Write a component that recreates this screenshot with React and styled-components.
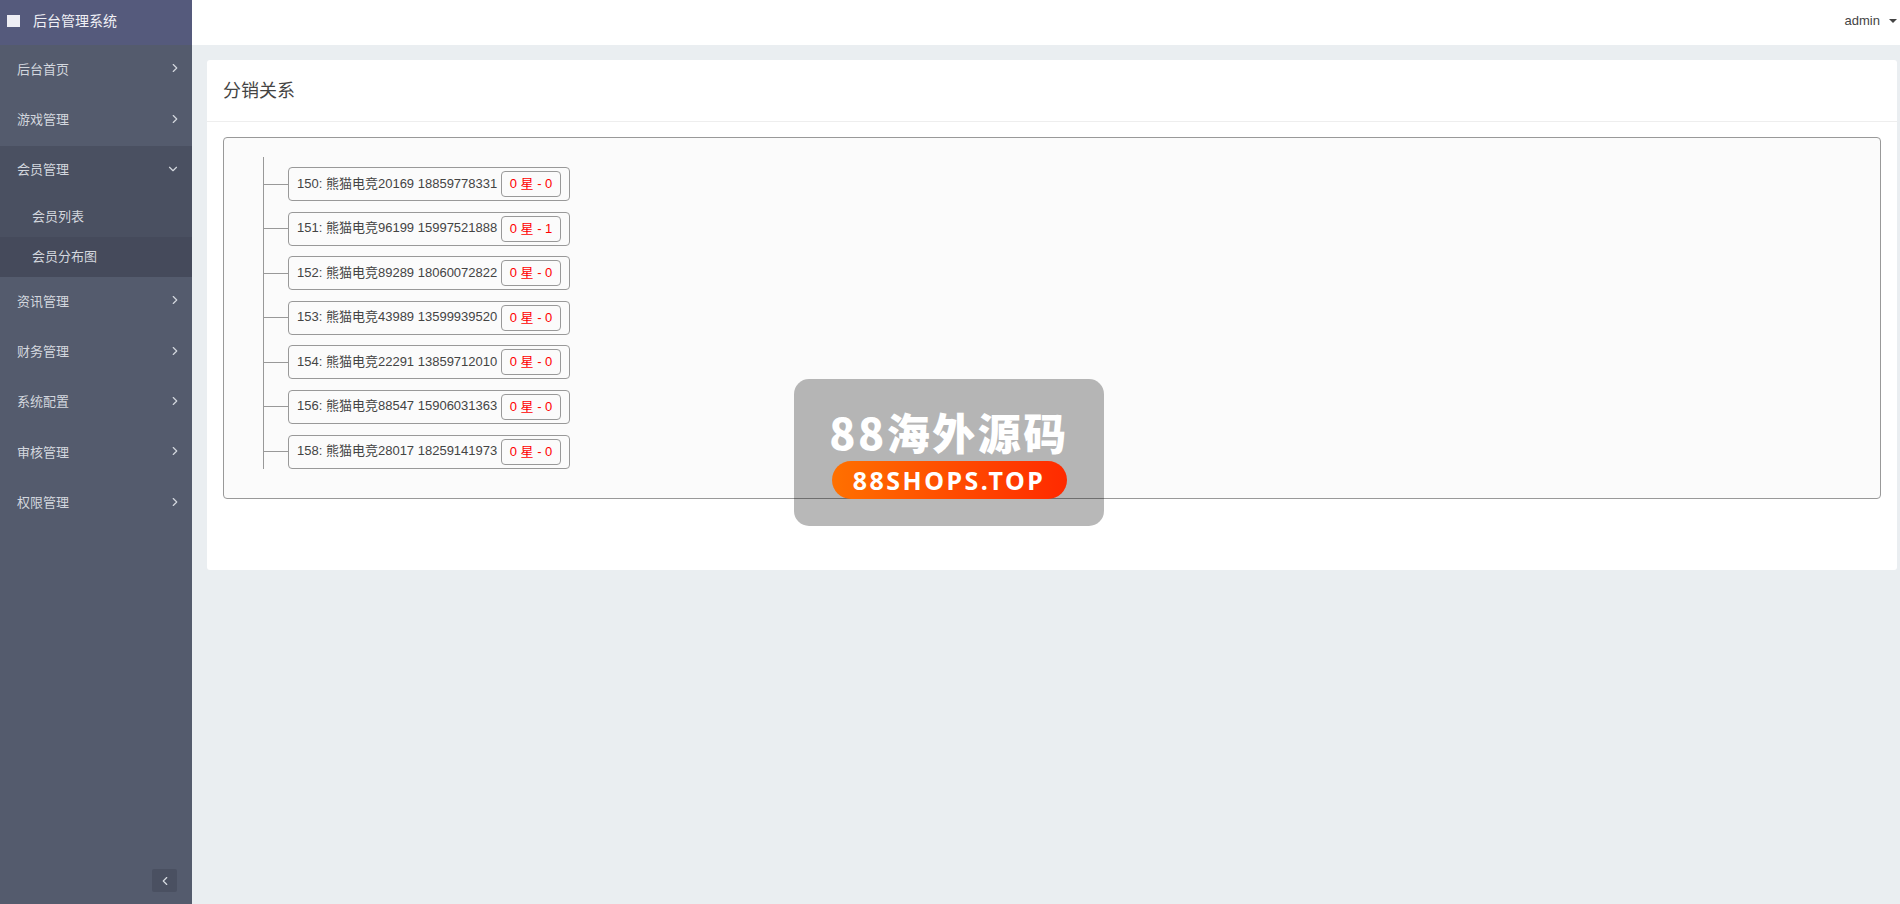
import { createGlobalStyle } from "styled-components";
import styled from "styled-components";
import { ChevronRight, ChevronDown, ChevronLeft } from "lucide-react";

const GlobalStyle = createGlobalStyle`
  html, body {
    margin: 0;
    padding: 0;
    height: 100%;
    overflow: hidden;
  }
  body {
    background: #eaeef1;
    font-family: "Liberation Sans", "Noto Sans CJK SC", sans-serif;
    font-size: 13px;
    color: #444;
  }
  * { box-sizing: border-box; }
`;

const Page = styled.div`
  position: relative;
  display: flex;
  width: 1900px;
  height: 904px;
`;

const Sidebar = styled.aside`
  width: 192px;
  flex: none;
  display: flex;
  flex-direction: column;
  background: #545b6d;
`;

const Brand = styled.div`
  height: 45px;
  flex: none;
  display: flex;
  align-items: center;
  padding: 0 0 5px 7px;
  gap: 13px;
  background: #555a7c;
  color: #f0f0f5;
  font-size: 14px;
`;

const BrandMark = styled.span`
  width: 13px;
  height: 12px;
  margin-top: 1px;
  background: #eeeef4;
`;

const Menu = styled.nav`
  flex: 1;
  display: flex;
  flex-direction: column;
`;

const MenuItem = styled.div`
  height: 50.4px;
  flex: none;
  display: flex;
  align-items: center;
  justify-content: space-between;
  padding: 0 10px 4px 17px;
  color: #d3d7de;
  background: ${(p) => (p.$open ? "#4a5061" : "transparent")};
`;

const OpenArrow = styled(ChevronDown)`
  margin-right: 2px;
`;

const SubItem = styled.div`
  height: 40.4px;
  flex: none;
  display: flex;
  align-items: center;
  padding: 0 0 2px 32px;
  color: #d3d7de;
  background: ${(p) => (p.$active ? "#454a5b" : "#4a5061")};
`;

const SideFooter = styled.div`
  display: flex;
  justify-content: flex-end;
  padding: 0 15px 12px 0;
`;

const CollapseBtn = styled.div`
  width: 25px;
  height: 23px;
  display: flex;
  align-items: center;
  justify-content: center;
  border-radius: 2px;
  background: #4a5061;
  color: #d8dce2;
`;

const Main = styled.main`
  flex: 1;
  display: flex;
  flex-direction: column;
  min-width: 0;
`;

const TopBar = styled.header`
  height: 45px;
  flex: none;
  display: flex;
  align-items: center;
  justify-content: flex-end;
  gap: 9px;
  padding: 0 3px 5px 0;
  background: #fff;
  color: #444;
`;

const Caret = styled.span`
  width: 0;
  height: 0;
  border-left: 4px solid transparent;
  border-right: 4px solid transparent;
  border-top: 4px solid #444;
  margin-top: 2px;
`;

const Content = styled.div`
  padding: 15px 3px 0 15px;
`;

const Card = styled.section`
  height: 510px;
  background: #fff;
  border-radius: 3px;
`;

const CardTitle = styled.h2`
  height: 62px;
  margin: 0;
  display: flex;
  align-items: center;
  padding: 0 0 4px 16px;
  border-bottom: 1px solid #eee;
  font-size: 18px;
  font-weight: 400;
  color: #444;
`;

const CardBody = styled.div`
  padding: 15px 16px 0;
`;

const TreeBox = styled.div`
  height: 362px;
  padding: 19px 0 0 39px;
  background: #fbfbfb;
  border: 1px solid #999;
  border-radius: 4px;
`;

const TreeList = styled.ul`
  margin: 0;
  padding: 10px 0 0;
  list-style: none;
  display: flex;
  flex-direction: column;
  gap: 10.6px;
  width: 307px;
  border-left: 1px solid #999;
`;

const TreeRow = styled.li`
  display: flex;
  align-items: center;
`;

const Connector = styled.span`
  width: 24px;
  height: 1px;
  flex: none;
  background: #999;
`;

const Node = styled.div`
  height: 34px;
  width: 282px;
  flex: none;
  display: flex;
  align-items: center;
  justify-content: space-between;
  padding: 0 8px;
  border: 1px solid #999;
  border-radius: 4px;
  white-space: nowrap;
`;

const NodeLabel = styled.span`
  padding-bottom: 4px;
`;

const Stars = styled.span`
  height: 26px;
  width: 60px;
  display: flex;
  align-items: center;
  justify-content: center;
  padding-bottom: 3px;
  border: 1px solid #999;
  border-radius: 4px;
  color: #f00;
`;

const Watermark = styled.div`
  position: absolute;
  left: 794px;
  top: 379px;
  width: 310px;
  height: 147px;
  display: flex;
  flex-direction: column;
  align-items: center;
  padding-top: 25px;
  border-radius: 15px;
  background: rgba(0, 0, 0, 0.28);
`;

const MarkTitle = styled.div`
  margin-bottom: 2px;
  font-family: "Noto Sans CJK SC", sans-serif;
  font-size: 43px;
  line-height: 55px;
  font-weight: 900;
  letter-spacing: 2.5px;
  color: #fff;
  white-space: nowrap;
`;

const MarkPill = styled.div`
  width: 235px;
  height: 38px;
  display: flex;
  align-items: center;
  justify-content: center;
  border-radius: 19px;
  background: linear-gradient(90deg, #ff7000, #ff2a00);
  color: #fff;
  font-family: "Noto Sans", sans-serif;
  font-size: 25px;
  font-weight: 700;
  letter-spacing: 2.5px;
`;

const menuBefore = ["后台首页", "游戏管理"];
const menuAfter = ["资讯管理", "财务管理", "系统配置", "审核管理", "权限管理"];

const members = [
  { id: 150, name: "熊猫电竞20169", phone: "18859778331", count: 0 },
  { id: 151, name: "熊猫电竞96199", phone: "15997521888", count: 1 },
  { id: 152, name: "熊猫电竞89289", phone: "18060072822", count: 0 },
  { id: 153, name: "熊猫电竞43989", phone: "13599939520", count: 0 },
  { id: 154, name: "熊猫电竞22291", phone: "13859712010", count: 0 },
  { id: 156, name: "熊猫电竞88547", phone: "15906031363", count: 0 },
  { id: 158, name: "熊猫电竞28017", phone: "18259141973", count: 0 },
];

export default function App() {
  return (
    <Page>
      <GlobalStyle />
      <Sidebar>
        <Brand>
          <BrandMark />
          后台管理系统
        </Brand>
        <Menu>
          {menuBefore.map((m) => (
            <MenuItem key={m}>
              {m}
              <ChevronRight size={14} />
            </MenuItem>
          ))}
          <MenuItem $open>
            会员管理
            <OpenArrow size={14} />
          </MenuItem>
          <SubItem>会员列表</SubItem>
          <SubItem $active>会员分布图</SubItem>
          {menuAfter.map((m) => (
            <MenuItem key={m}>
              {m}
              <ChevronRight size={14} />
            </MenuItem>
          ))}
        </Menu>
        <SideFooter>
          <CollapseBtn>
            <ChevronLeft size={14} />
          </CollapseBtn>
        </SideFooter>
      </Sidebar>
      <Main>
        <TopBar>
          admin
          <Caret />
        </TopBar>
        <Content>
          <Card>
            <CardTitle>分销关系</CardTitle>
            <CardBody>
              <TreeBox>
                <TreeList>
                  {members.map((m) => (
                    <TreeRow key={m.id}>
                      <Connector />
                      <Node>
                        <NodeLabel>
                          {m.id}: {m.name} {m.phone}
                        </NodeLabel>
                        <Stars>0 星 - {m.count}</Stars>
                      </Node>
                    </TreeRow>
                  ))}
                </TreeList>
              </TreeBox>
            </CardBody>
          </Card>
        </Content>
      </Main>
      <Watermark>
        <MarkTitle>88海外源码</MarkTitle>
        <MarkPill>88SHOPS.TOP</MarkPill>
      </Watermark>
    </Page>
  );
}
